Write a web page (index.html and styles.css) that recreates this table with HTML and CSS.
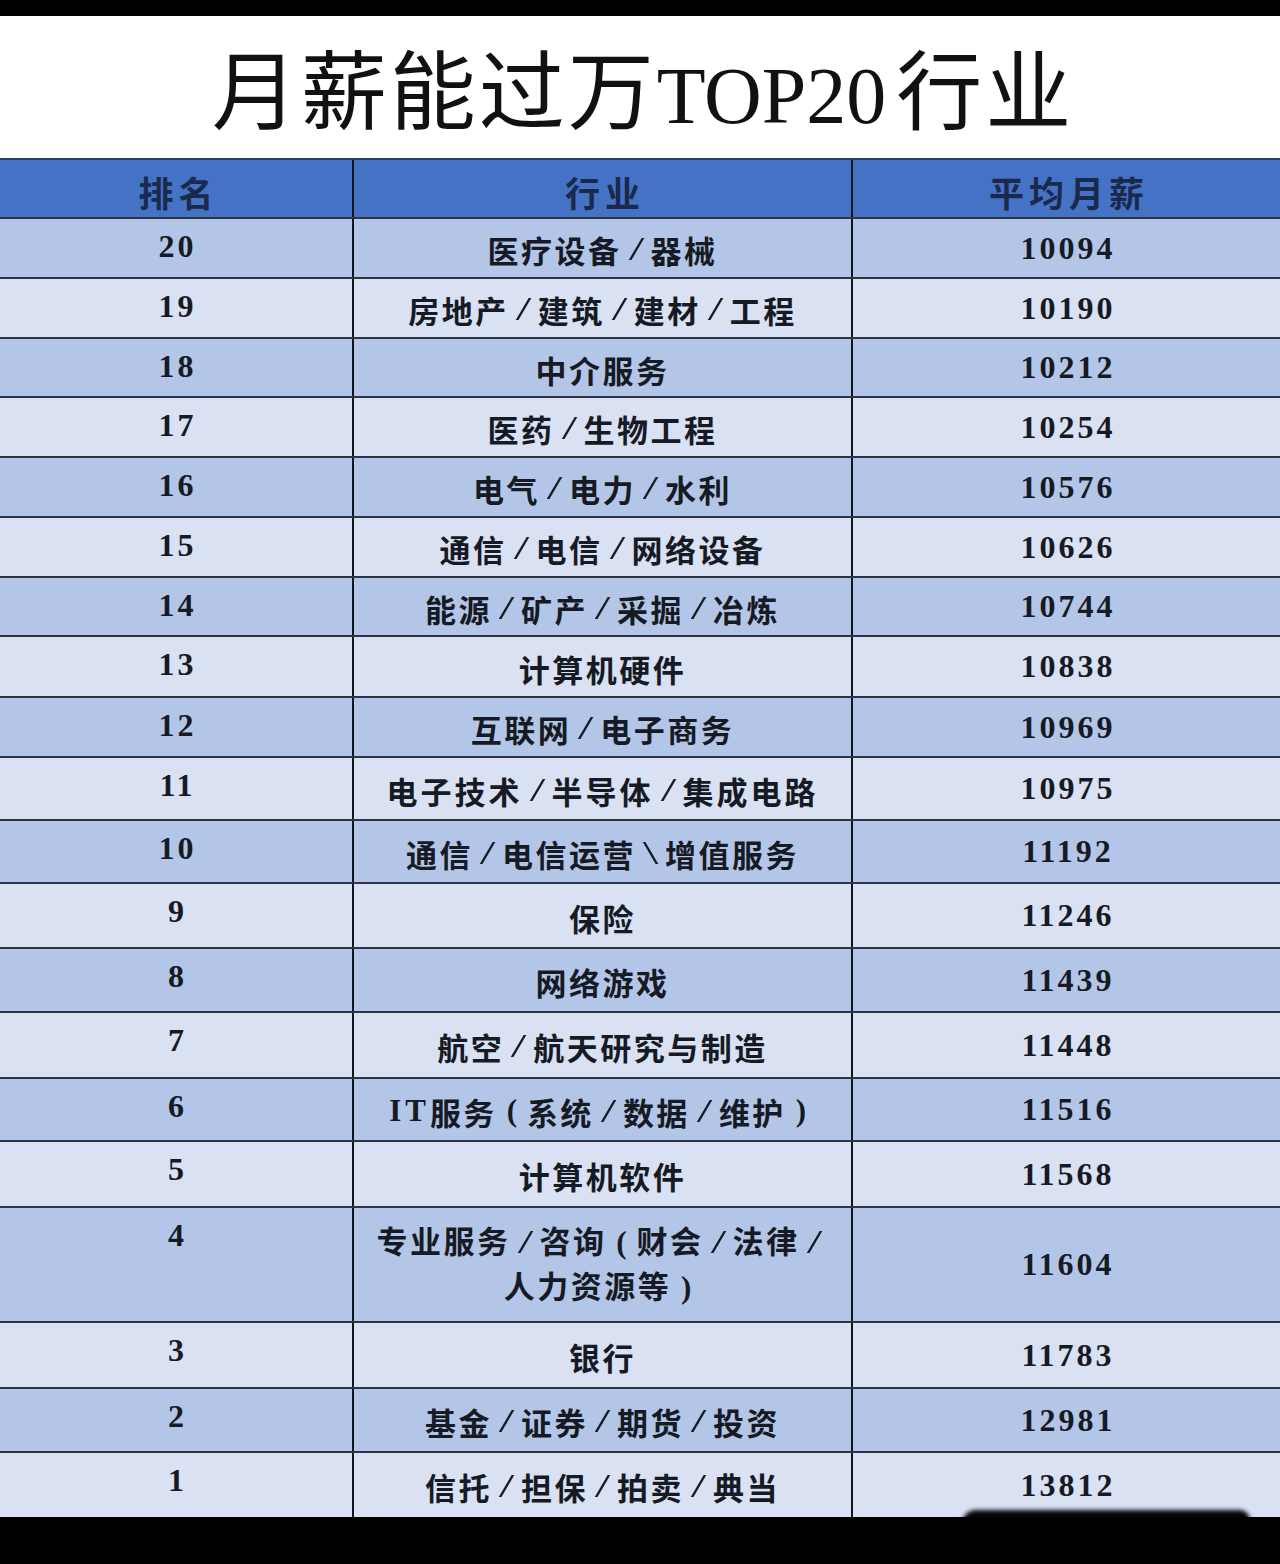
FILE: index.html
```html
<!DOCTYPE html>
<html lang="zh-CN">
<head>
<meta charset="utf-8">
<title>月薪能过万TOP20行业</title>
<link rel="stylesheet" href="styles.css">
</head>
<body>
<div class="sheet">
  <div class="title"><span class="title-text">月薪能过万<span class="lat">TOP20</span>行业</span></div>
  <div class="table">
    <div class="row head">
      <div class="cell c1">排名</div>
      <div class="cell c2">行业</div>
      <div class="cell c3">平均月薪</div>
    </div>
    <div class="row dark h60"><div class="cell c1 rank">20</div><div class="cell c2">医疗设备<span class="sl">/</span>器械</div><div class="cell c3">10094</div></div>
    <div class="row light h60"><div class="cell c1 rank">19</div><div class="cell c2">房地产<span class="sl">/</span>建筑<span class="sl">/</span>建材<span class="sl">/</span>工程</div><div class="cell c3">10190</div></div>
    <div class="row dark h59"><div class="cell c1 rank">18</div><div class="cell c2">中介服务</div><div class="cell c3">10212</div></div>
    <div class="row light h60"><div class="cell c1 rank">17</div><div class="cell c2">医药<span class="sl">/</span>生物工程</div><div class="cell c3">10254</div></div>
    <div class="row dark h60"><div class="cell c1 rank">16</div><div class="cell c2">电气<span class="sl">/</span>电力<span class="sl">/</span>水利</div><div class="cell c3">10576</div></div>
    <div class="row light h60"><div class="cell c1 rank">15</div><div class="cell c2">通信<span class="sl">/</span>电信<span class="sl">/</span>网络设备</div><div class="cell c3">10626</div></div>
    <div class="row dark h59"><div class="cell c1 rank">14</div><div class="cell c2">能源<span class="sl">/</span>矿产<span class="sl">/</span>采掘<span class="sl">/</span>冶炼</div><div class="cell c3">10744</div></div>
    <div class="row light h61"><div class="cell c1 rank">13</div><div class="cell c2">计算机硬件</div><div class="cell c3">10838</div></div>
    <div class="row dark h60"><div class="cell c1 rank">12</div><div class="cell c2">互联网<span class="sl">/</span>电子商务</div><div class="cell c3">10969</div></div>
    <div class="row light h63"><div class="cell c1 rank">11</div><div class="cell c2 wide">电子技术<span class="sl">/</span>半导体<span class="sl">/</span>集成电路</div><div class="cell c3">10975</div></div>
    <div class="row dark h63"><div class="cell c1 rank">10</div><div class="cell c2">通信<span class="sl">/</span>电信运营<span class="sl">\</span>增值服务</div><div class="cell c3">11192</div></div>
    <div class="row light h65"><div class="cell c1 rank">9</div><div class="cell c2">保险</div><div class="cell c3">11246</div></div>
    <div class="row dark h64"><div class="cell c1 rank">8</div><div class="cell c2">网络游戏</div><div class="cell c3">11439</div></div>
    <div class="row light h66"><div class="cell c1 rank">7</div><div class="cell c2">航空<span class="sl">/</span>航天研究与制造</div><div class="cell c3">11448</div></div>
    <div class="row dark h63"><div class="cell c1 rank">6</div><div class="cell c2"><span class="it">IT</span>服务<span class="pa">(</span>系统<span class="sl">/</span>数据<span class="sl">/</span>维护<span class="pa">)</span></div><div class="cell c3">11516</div></div>
    <div class="row light h66"><div class="cell c1 rank">5</div><div class="cell c2">计算机软件</div><div class="cell c3">11568</div></div>
    <div class="row dark h115"><div class="cell c1 rank">4</div><div class="cell c2 multi"><span class="ln">专业服务<span class="sl">/</span>咨询<span class="pa">(</span>财会<span class="sl">/</span>法律<span class="sl">/</span></span><span class="ln">人力资源等<span class="pa">)</span></span></div><div class="cell c3">11604</div></div>
    <div class="row light h66"><div class="cell c1 rank">3</div><div class="cell c2">银行</div><div class="cell c3">11783</div></div>
    <div class="row dark h64"><div class="cell c1 rank">2</div><div class="cell c2">基金<span class="sl">/</span>证券<span class="sl">/</span>期货<span class="sl">/</span>投资</div><div class="cell c3">12981</div></div>
    <div class="row light h66"><div class="cell c1 rank">1</div><div class="cell c2">信托<span class="sl">/</span>担保<span class="sl">/</span>拍卖<span class="sl">/</span>典当</div><div class="cell c3">13812</div></div>
  </div>
  <div class="smudge"></div>
</div>
</body>
</html>
```
FILE: styles.css
```css
html, body {
  margin: 0;
  padding: 0;
  background: #000;
}
body {
  padding-top: 16px;
  font-family: "Liberation Serif", "Noto Sans CJK SC", serif;
}
.sheet {
  position: relative;
  width: 1280px;
}
.title {
  height: 142px;
  background: #fff;
  display: flex;
  align-items: center;
  justify-content: center;
  padding-left: 6px;
  box-sizing: border-box;
  padding-top: 14px;
}
.title-text {
  font-size: 86px;
  line-height: 1;
  font-weight: 400;
  color: #111;
  letter-spacing: 3px;
  white-space: nowrap;
}
.title-text .lat {
  font-size: 80px;
  letter-spacing: 0;
  margin-right: 10px;
}
.table {
  display: flex;
  flex-direction: column;
}
.row {
  display: grid;
  grid-template-columns: 354px 499px 1fr;
  box-sizing: border-box;
  border-top: 2px solid #2c3444;
}
.row.head {
  height: 59px;
  background: #4472c4;
  border-top-color: #2a3f6a;
}
.row.dark { background: #b4c6e7; }
.row.light { background: #d9e1f2; }
.h59 { height: 59px; }
.h60 { height: 60px; }
.h61 { height: 61px; }
.h63 { height: 63px; }
.h64 { height: 64px; }
.h65 { height: 65px; }
.h66 { height: 66px; }
.h115 { height: 115px; }
.cell {
  display: flex;
  align-items: center;
  justify-content: center;
  box-sizing: border-box;
  font-weight: 700;
  color: #161a24;
  white-space: nowrap;
}
.c1, .c2 {
  border-right: 2px solid #10141c;
}
.row.head .cell {
  font-size: 35px;
  letter-spacing: 5px;
  color: #1b2a4c;
  padding-top: 6px;
  padding-left: 5px;
}
.c2 {
  font-size: 31px;
  letter-spacing: 2.5px;
  padding-top: 3px;
}
.c2.wide {
  letter-spacing: 3px;
}
.c3 {
  font-size: 32px;
  letter-spacing: 3px;
  padding-left: 3px;
}
.rank {
  align-items: flex-start;
  font-size: 32px;
  line-height: 36px;
  letter-spacing: 3px;
  padding-top: 9px;
  padding-left: 3px;
}
.sl {
  display: inline-block;
  width: 29px;
  text-align: center;
  letter-spacing: 0;
  font-size: 33px;
  font-weight: 400;
  transform: scaleX(1.7);
}
.pa {
  display: inline-block;
  width: 30px;
  text-align: center;
  letter-spacing: 0;
  font-size: 31px;
  font-weight: 700;
}
.it {
  letter-spacing: 4px;
}
.multi {
  flex-direction: column;
  line-height: 45px;
  padding-top: 0;
}
.ln {
  display: block;
}
.smudge {
  position: absolute;
  left: 962px;
  top: 1494px;
  width: 288px;
  height: 32px;
  background: #050505;
  border-radius: 14px 10px 6px 16px;
  filter: blur(2px);
}
```
